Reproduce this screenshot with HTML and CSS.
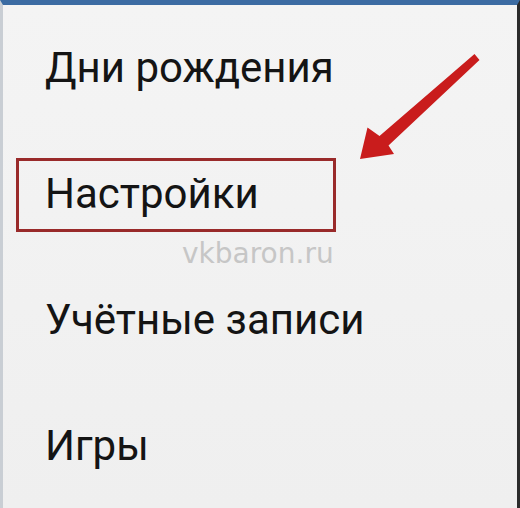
FILE: index.html
```html
<!DOCTYPE html>
<html lang="ru">

<head>
  <meta charset="UTF-8" />
  <meta name="viewport" content="width=device-width, initial-scale=1.0" />
  <title>Меню</title>
  <link rel="stylesheet" href="styles.css">
</head>

<body>

  <div class="screen">
    <!-- Пункты меню -->
    <ul class="menu">
      <li class="menu-item">Дни рождения</li>
      <li class="menu-item">Настройки</li>
      <li class="menu-item">Учётные записи</li>
      <li class="menu-item">Игры</li>
    </ul>

    <!-- Пометки поверх скриншота -->
    <div class="highlight"></div>
    <div class="watermark">vkbaron.ru</div>
    <svg class="arrow" width="520" height="508" viewBox="0 0 520 508">
      <polygon points="474.5,54 479.5,60 388.5,145.5 394,154 360,159 367.5,127.5 379.5,136" fill="#c91c1c" />
    </svg>
  </div>

</body>

</html>
```

FILE: styles.css
```css
* {
  box-sizing: border-box;
}

body {
  margin: 0;
  font-family: Roboto, "Noto Sans", sans-serif;
  background: #f1f1f1;
}

.screen {
  position: relative;
  width: 520px;
  height: 508px;
  overflow: hidden;
  background: linear-gradient(to bottom, #f4f4f4, #efefef);
  border-top: 5px solid #3c6ca3;
  border-left: 3px solid #c9ced4;
  border-right: 3px solid #2b2b2b;
}

.menu {
  list-style: none;
  margin: 0;
  padding: 0 0 0 42px;
}

.menu-item {
  height: 126px;
  line-height: 126px;
  font-size: 42px;
  color: #141414;
}

.highlight {
  position: absolute;
  left: 13px;
  top: 153px;
  width: 320px;
  height: 74px;
  border: 3px solid #992a2a;
}

.watermark {
  position: absolute;
  left: 179px;
  top: 232px;
  font-family: "DejaVu Sans", sans-serif;
  font-size: 28px;
  color: #c6c6c6;
}

.arrow {
  position: absolute;
  left: -3px;
  top: -5px;
}
```
